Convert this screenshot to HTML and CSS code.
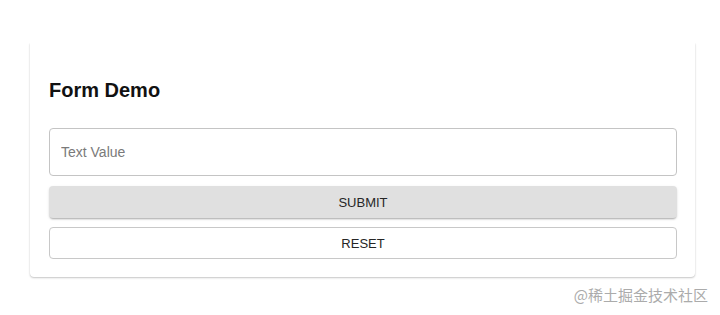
FILE: index.html
```html
<!DOCTYPE html>
<html lang="en">
<head>
<meta charset="utf-8">
<title>Form Demo</title>
<link rel="stylesheet" href="styles.css">
</head>
<body>
<div class="page">
  <div class="card">
    <h2 class="title">Form Demo</h2>
    <form class="form">
      <div class="field"><input class="input" type="text" placeholder="Text Value"></div>
      <button type="button" class="btn btn-contained">SUBMIT</button>
      <button type="button" class="btn btn-outlined">RESET</button>
    </form>
  </div>
  <div class="watermark">@稀土掘金技术社区</div>
</div>
</body>
</html>
```
FILE: styles.css
```css
html, body {
  margin: 0;
  padding: 0;
  background: #ffffff;
}
body {
  font-family: "Liberation Sans", Arial, sans-serif;
  width: 720px;
  height: 315px;
  overflow: hidden;
}
.page {
  padding-top: 43px;
  display: flex;
  flex-direction: column;
}
.card {
  margin-left: 30px;
  width: 665px;
  box-sizing: border-box;
  padding: 35px 18px 18px 19px;
  background: #fff;
  border-radius: 0 0 4px 4px;
  box-shadow: 0 1px 2px 0 rgba(0,0,0,0.22), 0 0 1px 0 rgba(0,0,0,0.12);
  clip-path: inset(0 -6px -6px -6px);
}
.title {
  margin: 0;
  font-size: 20px;
  line-height: 24px;
  font-weight: 700;
  color: #111;
}
.form {
  margin-top: 26px;
  display: flex;
  flex-direction: column;
}
.field {
  display: flex;
}
.input {
  flex: 1;
  height: 48px;
  box-sizing: border-box;
  border: 1px solid #c4c4c4;
  border-radius: 4px;
  padding: 0 11px;
  font-family: "Liberation Sans", Arial, sans-serif;
  font-size: 14px;
  color: #222;
  outline: none;
}
.input::placeholder {
  color: #7a7a7a;
}
.btn {
  height: 32px;
  box-sizing: border-box;
  border-radius: 4px;
  font-family: "Liberation Sans", Arial, sans-serif;
  font-size: 13px;
  color: #262626;
  letter-spacing: 0;
  cursor: pointer;
  padding: 0;
}
.btn-contained {
  margin-top: 10px;
  background: #e0e0e0;
  border: none;
  box-shadow: 0 2px 2px -1px rgba(0,0,0,0.28), 0 1px 3px 0 rgba(0,0,0,0.10);
}
.btn-outlined {
  margin-top: 9px;
  background: #fff;
  border: 1px solid #c8c8c8;
}
.watermark {
  align-self: flex-end;
  margin-top: 8px;
  margin-right: 12px;
  font-family: "Noto Sans CJK SC", "Liberation Sans", sans-serif;
  font-size: 15px;
  line-height: 20px;
  color: #ababab;
}
```
